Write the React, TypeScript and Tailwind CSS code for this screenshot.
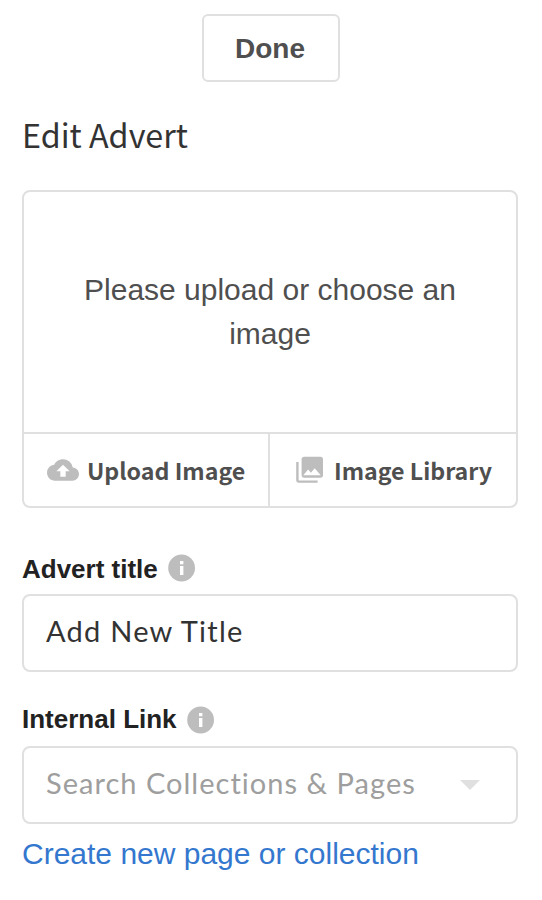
import { MdCloudUpload } from "react-icons/md";

const sans = "font-['Liberation_Sans',Arial,sans-serif]";
const source = "font-['Noto_Sans_CJK_SC',sans-serif]";
const avenir = "font-['Lato',sans-serif]";

function InfoIcon({ className }: { className: string }) {
  return (
    <svg className={`size-8 shrink-0 ${className}`} viewBox="0 0 32 32">
      <circle cx="15.6" cy="16" r="13.4" fill="#bdbdbd" />
      <path d="M14 9h3.4v3.3H14zM14 14h3.4v9H14z" fill="#fff" />
    </svg>
  );
}

function LibraryIcon() {
  return (
    <svg className="mr-2 size-8 shrink-0" viewBox="0 0 32 32">
      <rect x="7.6" y="2.7" width="21.4" height="21" rx="2.6" fill="#bdbdbd" />
      <path d="M9.3 21.2l4.8-5.8 2.8 3.4 3.8-4.5 6 6.9z" fill="#fff" />
      <path d="M3.4 8v18.3a1.3 1.3 0 0 0 1.3 1.3H23.6" fill="none" stroke="#bdbdbd" strokeWidth="2.4" />
    </svg>
  );
}

function FieldLabel({ text, iconClass }: { text: string; iconClass: string }) {
  return (
    <div className="flex h-[30px] items-center gap-2">
      <label className={`${sans} text-[26px] leading-[30px] font-bold whitespace-nowrap text-[#222]`}>{text}</label>
      <InfoIcon className={iconClass} />
    </div>
  );
}

export default function App() {
  return (
    <main className="flex h-[900px] w-[542px] flex-col bg-white pt-[14px] pr-6 pl-[22px]">
      <button className={`${sans} ml-[180px] h-[68px] w-[138px] shrink-0 rounded-md border-2 border-[#e0e0e0] pt-px pr-0.5 text-[28px] font-bold text-[#4f4f4f]`}>
        Done
      </button>
      <h1 className={`${source} mt-[27px] h-[50px] text-[32.3px] leading-[50px] whitespace-nowrap text-[#333]`}>Edit Advert</h1>

      <section className="mt-[31px] flex h-[318px] flex-col rounded-lg border-2 border-[#e0e0e0]">
        <div className={`${sans} flex h-[240px] items-center justify-center px-12 text-center text-[30px] leading-[44px] text-[#4f4f4f]`}>
          <p>Please upload or choose an image</p>
        </div>
        <div className="flex grow border-t-2 border-[#e0e0e0]">
          <button className={`${source} flex w-[246px] items-center border-r-2 border-[#e0e0e0] pl-[23px] text-[23.2px] font-bold whitespace-nowrap text-[#4f4f4f]`}>
            <MdCloudUpload className="mr-2 size-8 shrink-0 text-[#bdbdbd]" />
            Upload Image
          </button>
          <button className={`${source} flex grow items-center pl-6 text-[23.2px] font-bold whitespace-nowrap text-[#4f4f4f]`}>
            <LibraryIcon />
            Image Library
          </button>
        </div>
      </section>

      <div className="mt-[46px]">
        <FieldLabel text="Advert title" iconClass="mb-0.5" />
      </div>
      <div className={`${avenir} mt-[10px] flex h-[78px] shrink-0 items-center rounded-lg border-2 border-[#e0e0e0] px-[22px] pb-[5px] text-[29px] tracking-[1.25px] text-[#333]`}>
        <span className="whitespace-nowrap">Add New Title</span>
      </div>

      <div className="mt-8">
        <FieldLabel text="Internal Link" iconClass="mt-0.5" />
      </div>
      <div className={`${avenir} mt-3 flex h-[78px] shrink-0 items-center justify-between rounded-lg border-2 border-[#e0e0e0] pr-9 pl-[22px] text-[29px] tracking-[1.02px] text-[#9e9e9e]`}>
        <span className="pb-[5px] whitespace-nowrap">Search Collections &amp; Pages</span>
        <svg className="h-[10px] w-5" viewBox="0 0 20 10" fill="#e0e0e0">
          <path d="M0 0h20L10 10z" />
        </svg>
      </div>
      <a className={`${sans} mt-3 text-[30px] leading-9 whitespace-nowrap text-[#3477ce]`}>Create new page or collection</a>
    </main>
  );
}
